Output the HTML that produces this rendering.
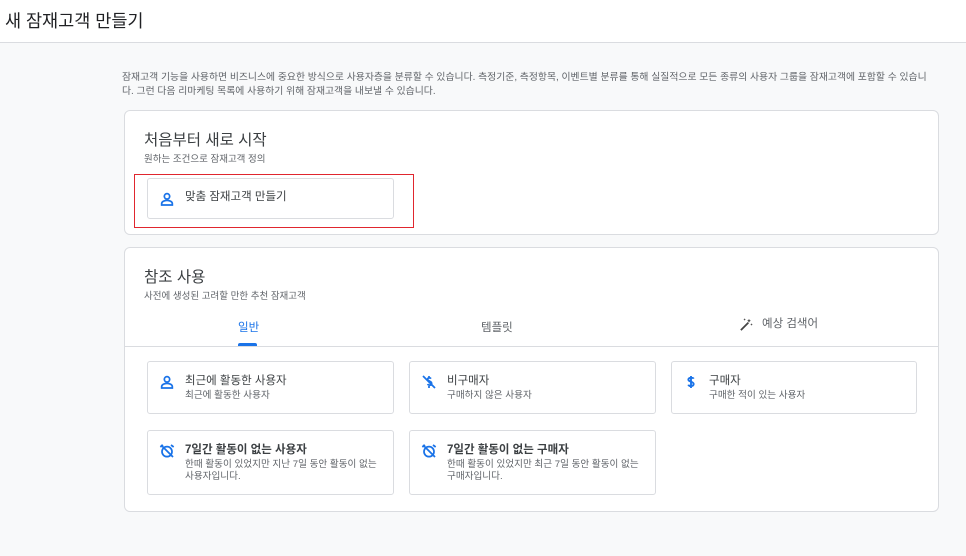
<!DOCTYPE html>
<html><head><meta charset="utf-8"><style>
*{box-sizing:border-box;margin:0;padding:0}
body{width:966px;height:556px;overflow:hidden;background:#f8f9fa;font-family:"Liberation Sans","Noto Sans CJK KR",sans-serif;color:#202124;position:relative}
.hdr{position:absolute;left:0;top:0;width:966px;height:43px;background:#fff;border-bottom:1px solid #dadce0}
.hdr h1{position:absolute;left:5px;top:8px;font-size:17.5px;font-weight:400;color:#202124}
.desc{position:absolute;left:122px;top:71px;width:814px;font-size:9.85px;line-height:14px;color:#5f6368;word-break:break-all}
.card{position:absolute;left:124px;width:815px;background:#fff;border:1px solid #dadce0;border-radius:6px}
.t{position:absolute;left:19px;font-size:15.5px;color:#3c4043}
.s{position:absolute;left:19px;font-size:9.5px;color:#5f6368}
.box{position:absolute;background:#fff;border:1px solid #dadce0;border-radius:3px}
.box .bt{position:absolute;left:37px;top:10px;font-size:11.5px;color:#3c4043}
.box .bs{position:absolute;left:37px;top:28px;font-size:9.6px;color:#5f6368;line-height:12px;width:192px;word-break:break-all}
.box svg{position:absolute;left:11px;top:12px}
.red{position:absolute;left:134px;top:174px;width:280px;height:54px;border:1.5px solid #e0262e}
.tab{position:absolute;font-size:11.5px;color:#5f6368}
</style></head><body>
<div class="hdr"><h1>새 잠재고객 만들기</h1></div>
<div class="desc">잠재고객 기능을 사용하면 비즈니스에 중요한 방식으로 사용자층을 분류할 수 있습니다. 측정기준, 측정항목, 이벤트별 분류를 통해 실질적으로 모든 종류의 사용자 그룹을 잠재고객에 포함할 수 있습니다. 그런 다음 리마케팅 목록에 사용하기 위해 잠재고객을 내보낼 수 있습니다.</div>

<div class="card" style="top:110px;height:125px">
<div class="t" style="top:17px">처음부터 새로 시작</div>
<div class="s" style="top:40px">원하는 조건으로 잠재고객 정의</div>
<div class="box" style="left:22px;top:67px;width:247px;height:41px">
<svg width="16" height="16" viewBox="0 0 24 24" style="top:12px"><circle cx="12" cy="8" r="4" fill="none" stroke="#1a73e8" stroke-width="2.6"/><path d="M4 21v-2c0-3 4-5 8-5s8 2 8 5v2z" fill="none" stroke="#1a73e8" stroke-width="2.6"/></svg>
<div class="bt" style="top:9px">맞춤 잠재고객 만들기</div></div>
</div>
<div class="red"></div>

<div class="card" style="top:247px;height:265px">
<div class="t" style="top:17px">참조 사용</div>
<div class="s" style="top:40px">사전에 생성된 고려할 만한 추천 잠재고객</div>
<div class="tab" style="left:113px;top:71px;color:#1a73e8">일반</div>
<div style="position:absolute;left:113px;top:95px;width:19px;height:3px;background:#1a73e8;border-radius:2px 2px 0 0"></div>
<div class="tab" style="left:356px;top:71px">템플릿</div>
<svg style="position:absolute;left:614px;top:69px" width="15" height="15" viewBox="0 0 24 24"><path d="M3 21L15 9" stroke="#444" stroke-width="2.8"/><path d="M16 3l1 2 2 1-2 1-1 2-1-2-2-1 2-1zM20 10l.6 1.4 1.4.6-1.4.6-.6 1.4-.6-1.4-1.4-.6 1.4-.6zM9 2l.6 1.4 1.4.6-1.4.6L9 6l-.6-1.4L7 4l1.4-.6z" fill="#444"/></svg>
<div class="tab" style="left:637px;top:67px">예상 검색어</div>
<div style="position:absolute;left:0;top:98px;width:813px;height:1px;background:#dadce0"></div>

<div class="box" style="left:22px;top:113px;width:247px;height:53px">
<svg width="16" height="16" viewBox="0 0 24 24"><circle cx="12" cy="8" r="4" fill="none" stroke="#1a73e8" stroke-width="2.6"/><path d="M4 21v-2c0-3 4-5 8-5s8 2 8 5v2z" fill="none" stroke="#1a73e8" stroke-width="2.6"/></svg>
<div class="bt">최근에 활동한 사용자</div><div class="bs">최근에 활동한 사용자</div></div>
<div class="box" style="left:284px;top:113px;width:247px;height:53px">
<svg width="16" height="16" viewBox="0 0 24 24"><path d="M15 7c-1-1.5-5-2-5 1s6 2 6 6-5 3-6 1M12 3v3M12 18v3M3 3l18 18" fill="none" stroke="#1a73e8" stroke-width="2.6"/></svg>
<div class="bt">비구매자</div><div class="bs">구매하지 않은 사용자</div></div>
<div class="box" style="left:546px;top:113px;width:246px;height:53px">
<svg width="16" height="16" viewBox="0 0 24 24"><path d="M16 7c-1-2-8-2-8 1.5S16 11 16 15s-7 4-8 1M12 3v18" fill="none" stroke="#1a73e8" stroke-width="2.8"/></svg>
<div class="bt">구매자</div><div class="bs">구매한 적이 있는 사용자</div></div>

<div class="box" style="left:22px;top:182px;width:247px;height:65px">
<svg width="16" height="16" viewBox="0 0 24 24"><circle cx="12" cy="13" r="7.5" fill="none" stroke="#1a73e8" stroke-width="2.6"/><path d="M2 6l4-3M22 6l-4-3M3 3l18 18" stroke="#1a73e8" stroke-width="2.6"/></svg>
<div class="bt" style="font-weight:600">7일간 활동이 없는 사용자</div><div class="bs">한때 활동이 있었지만 지난 7일 동안 활동이 없는 사용자입니다.</div></div>
<div class="box" style="left:284px;top:182px;width:247px;height:65px">
<svg width="16" height="16" viewBox="0 0 24 24"><circle cx="12" cy="13" r="7.5" fill="none" stroke="#1a73e8" stroke-width="2.6"/><path d="M2 6l4-3M22 6l-4-3M3 3l18 18" stroke="#1a73e8" stroke-width="2.6"/></svg>
<div class="bt" style="font-weight:600">7일간 활동이 없는 구매자</div><div class="bs">한때 활동이 있었지만 최근 7일 동안 활동이 없는 구매자입니다.</div></div>
</div>
</body></html>
